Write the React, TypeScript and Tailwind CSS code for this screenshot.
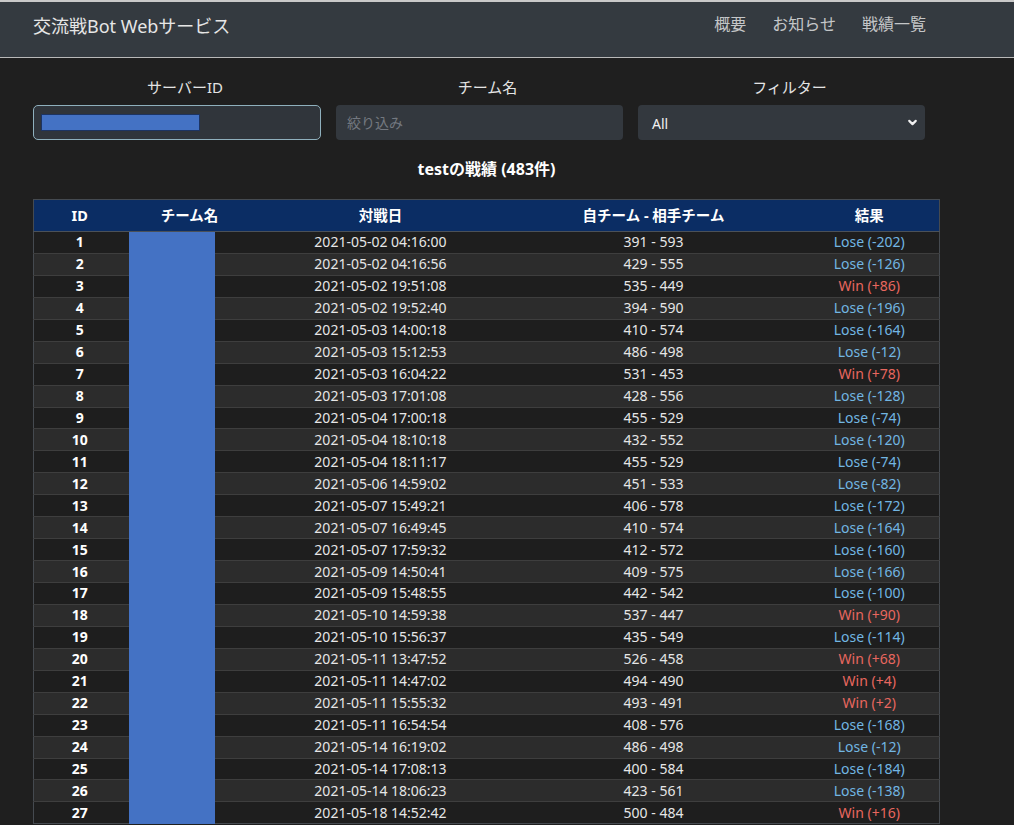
import { ChevronDown } from 'lucide-react'

const navItems = ['概要', 'お知らせ', '戦績一覧']

const rawRows: [string, string, number, number][] = [
  ['1', '2021-05-02 04:16:00', 391, 593],
  ['2', '2021-05-02 04:16:56', 429, 555],
  ['3', '2021-05-02 19:51:08', 535, 449],
  ['4', '2021-05-02 19:52:40', 394, 590],
  ['5', '2021-05-03 14:00:18', 410, 574],
  ['6', '2021-05-03 15:12:53', 486, 498],
  ['7', '2021-05-03 16:04:22', 531, 453],
  ['8', '2021-05-03 17:01:08', 428, 556],
  ['9', '2021-05-04 17:00:18', 455, 529],
  ['10', '2021-05-04 18:10:18', 432, 552],
  ['11', '2021-05-04 18:11:17', 455, 529],
  ['12', '2021-05-06 14:59:02', 451, 533],
  ['13', '2021-05-07 15:49:21', 406, 578],
  ['14', '2021-05-07 16:49:45', 410, 574],
  ['15', '2021-05-07 17:59:32', 412, 572],
  ['16', '2021-05-09 14:50:41', 409, 575],
  ['17', '2021-05-09 15:48:55', 442, 542],
  ['18', '2021-05-10 14:59:38', 537, 447],
  ['19', '2021-05-10 15:56:37', 435, 549],
  ['20', '2021-05-11 13:47:52', 526, 458],
  ['21', '2021-05-11 14:47:02', 494, 490],
  ['22', '2021-05-11 15:55:32', 493, 491],
  ['23', '2021-05-11 16:54:54', 408, 576],
  ['24', '2021-05-14 16:19:02', 486, 498],
  ['25', '2021-05-14 17:08:13', 400, 584],
  ['26', '2021-05-14 18:06:23', 423, 561],
  ['27', '2021-05-18 14:52:42', 500, 484],
]

const rows = rawRows.map(([id, date, mine, theirs]) => {
  const diff = mine - theirs
  return {
    id,
    date,
    score: `${mine} - ${theirs}`,
    win: diff > 0,
    result: diff > 0 ? `Win (+${diff})` : `Lose (${diff})`,
  }
})

const Navbar = () => (
  <nav className="h-[58px] border-t-2 border-b border-t-[#c9c9c9] border-b-[#b9b9b9] bg-[#343a40] flex items-start justify-between pl-[33px] pr-[88px]">
    <span className="mt-[11px] text-[18px] text-[#e6e6e6]">交流戦Bot Webサービス</span>
    <div className="flex gap-[26px] mt-[10px]">
      {navItems.map(label => (
        <a key={label} className="text-[16px] text-[#c4c6c8]">
          {label}
        </a>
      ))}
    </div>
  </nav>
)

const Filters = () => (
  <div className="flex gap-[15px]">
    <div className="w-[288px] flex flex-col items-center">
      <label className="ml-[16px] text-[15px] leading-[22px] text-[#e4e4e4] mb-[7px]">サーバーID</label>
      <div className="w-full h-[35px] rounded-[5px] border-[1.5px] border-[#8fb0bd] bg-[#30353b] flex items-center pl-[7px]">
        <div className="w-[159px] h-[17px] bg-[#4472c4] border border-[#1d3462]" />
      </div>
    </div>
    <div className="w-[287px] flex flex-col items-center">
      <label className="ml-[16px] text-[15px] leading-[22px] text-[#e4e4e4] mb-[7px]">チーム名</label>
      <input
        placeholder="絞り込み"
        className="w-full h-[35px] rounded-[4px] bg-[#33383e] px-[11px] text-[14px] text-[#e4e4e4] placeholder:text-[#737880] outline-none"
      />
    </div>
    <div className="w-[287px] flex flex-col items-center">
      <label className="ml-[16px] text-[15px] leading-[22px] text-[#e4e4e4] mb-[7px]">フィルター</label>
      <div className="w-full h-[35px] rounded-[4px] bg-[#33383e] flex items-center justify-between pl-[14px] pr-[6px] text-[14px] text-[#f0f0f0]">
        <span className="mt-[1px]">All</span>
        <ChevronDown size={13} strokeWidth={4} className="text-[#f0f0f0]" />
      </div>
    </div>
  </div>
)

const ResultTable = () => (
  <div className="relative w-[907px]">
    <table className="w-full table-fixed border-collapse border border-[#454a50] text-[14px]">
      <colgroup>
        <col className="w-[92px]" />
        <col className="w-[128px]" />
        <col className="w-[254px]" />
        <col className="w-[292px]" />
        <col />
      </colgroup>
      <thead>
        <tr className="h-[32px] bg-[#0b2d64] border-b border-[#4b5158]">
          {['ID', 'チーム名', '対戦日', '自チーム - 相手チーム', '結果'].map(h => (
            <th key={h} className="font-bold text-[14.5px] text-white text-center align-middle">
              {h}
            </th>
          ))}
        </tr>
      </thead>
      <tbody>
        {rows.map((r, i) => (
          <tr
            key={r.id}
            className={`h-[21.95px] border-t border-[#3e3e3e] ${i % 2 === 0 ? 'bg-[#1e1e1e]' : 'bg-[#2c2c2c]'}`}
          >
            <td className="text-center font-bold text-white leading-[20px]">{r.id}</td>
            <td />
            <td className="text-center text-[#e6e6e6] leading-[20px]">{r.date}</td>
            <td className="text-center text-[#e6e6e6] leading-[20px]">{r.score}</td>
            <td className={`text-center leading-[20px] ${r.win ? 'text-[#e8675f]' : 'text-[#72b6e2]'}`}>
              {r.result}
            </td>
          </tr>
        ))}
      </tbody>
    </table>
    {/* redacted team names */}
    <div className="absolute left-[96px] top-[33px] bottom-0 w-[86px] bg-[#4472c4]" />
  </div>
)

export default function App() {
  return (
    <div className="h-screen bg-[#1f1f1f] font-['Noto_Sans','Noto_Sans_CJK_JP',sans-serif] overflow-hidden">
      <Navbar />
      <main className="pl-[33px] pt-[18px]">
        <Filters />
        <h2 className="w-[907px] text-center text-[16px] leading-[22px] font-bold text-white mt-[18px] mb-[19px]">
          testの戦績 (483件)
        </h2>
        <ResultTable />
      </main>
    </div>
  )
}
